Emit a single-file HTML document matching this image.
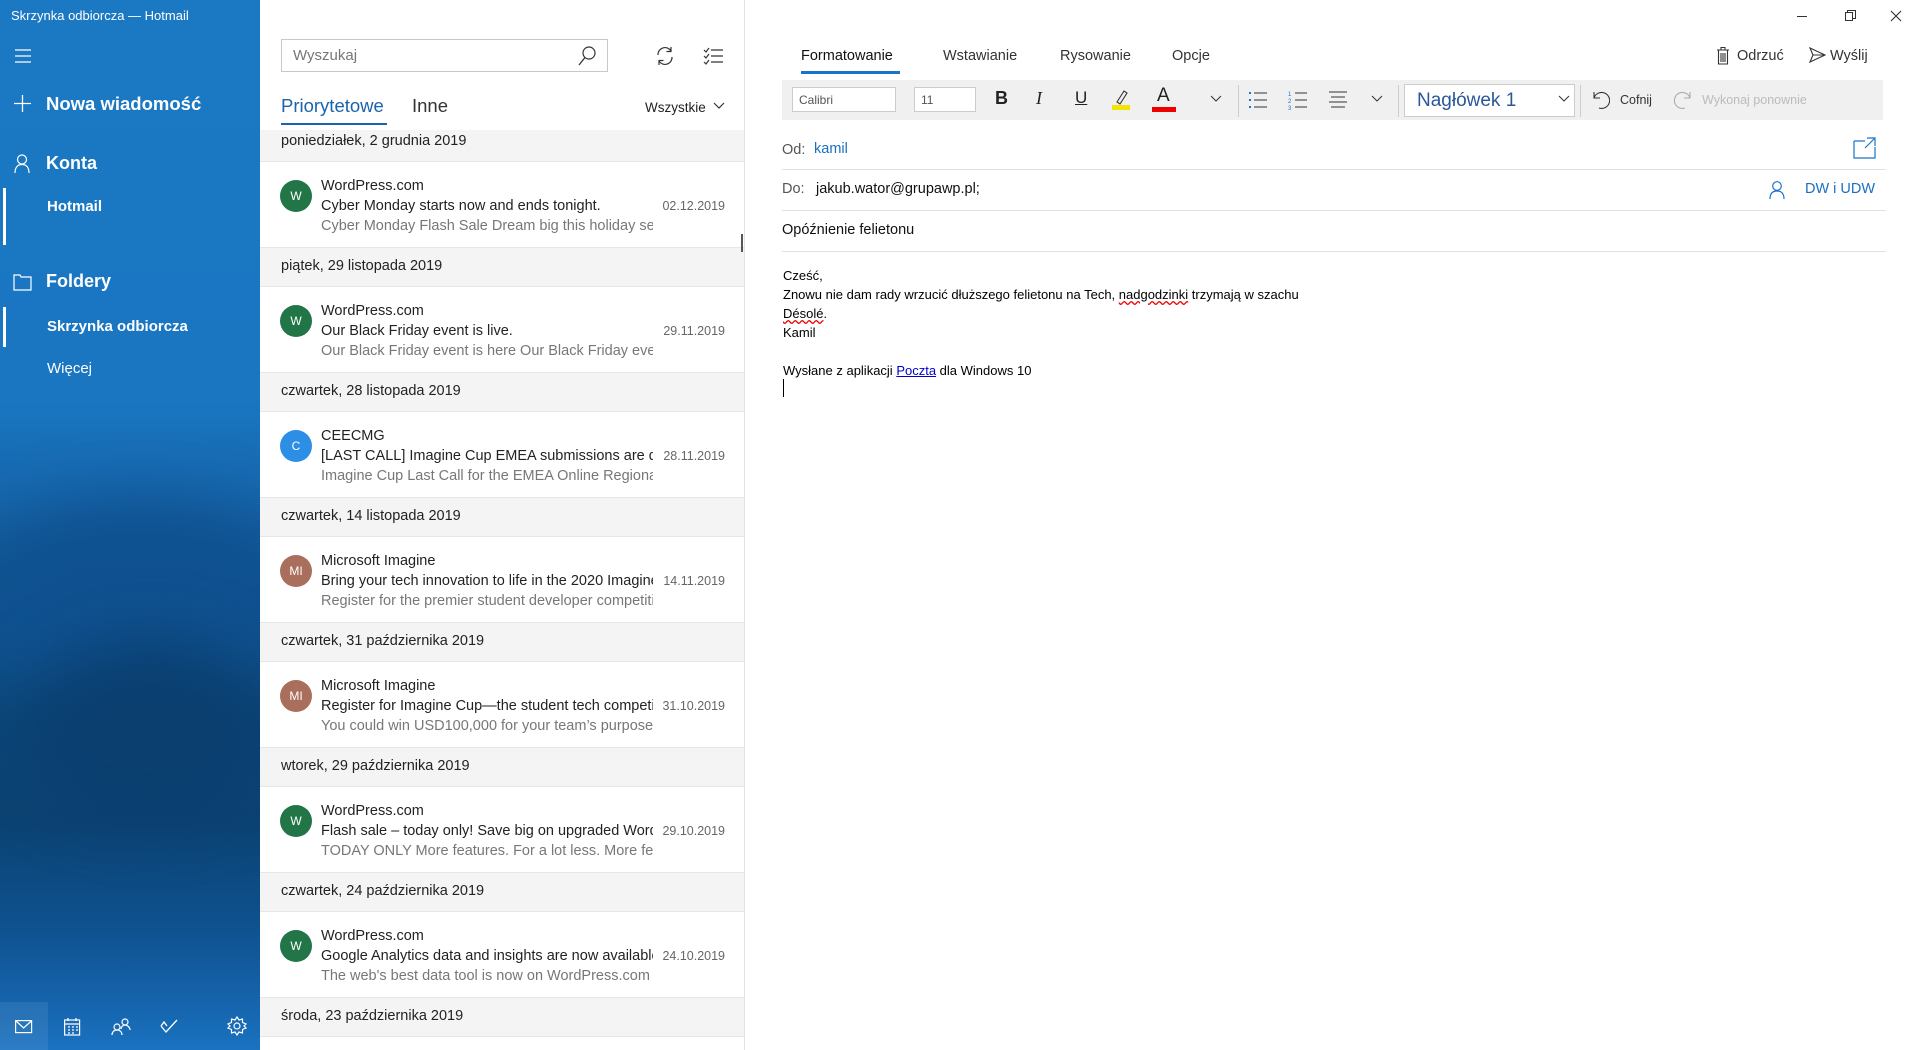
<!DOCTYPE html>
<html><head><meta charset="utf-8"><style>
*{margin:0;padding:0;box-sizing:border-box}
html,body{width:1920px;height:1050px;overflow:hidden}
body{font-family:"Liberation Sans","Noto Sans CJK JP",sans-serif;background:#fff;position:relative;color:#000}
.a{position:absolute;white-space:nowrap}
#side{position:absolute;left:0;top:0;width:260px;height:1050px;overflow:hidden;
background:linear-gradient(180deg,#1b78c3 0px,#1a76c1 400px,#1666ac 500px,#10558f 600px,#0c4679 720px,#0b4272 820px,#0f5290 930px,#1563ab 1000px,#1a72c0 1050px)}
#side .w{color:#fff}
.blob{position:absolute;border-radius:50%;filter:blur(30px)}
#list{position:absolute;left:260px;top:0;width:485px;height:1050px;background:#fff;border-right:1px solid #e3e3e3;overflow:hidden}
.grp{height:125px}
.hdr{height:40px;background:#f4f4f4;border-top:1px solid #e6e6e6;border-bottom:1px solid #e6e6e6;font-size:14.5px;color:#222;padding:10px 0 0 21px}
.it{height:85px;position:relative}
.av{position:absolute;left:20px;top:18px;width:32px;height:32px;border-radius:50%;color:#fff;font-size:12px;text-align:center;line-height:32px}
.l1,.l2,.l3{position:absolute;left:61px;width:332px;overflow:hidden;white-space:nowrap;font-size:14.5px}
.l1{top:16px;color:#222}.l2{top:36px;color:#222}.l3{top:56px;color:#777}
.dt{position:absolute;right:19px;top:37px;font-size:12.5px;color:#666}
.tb{font-size:14.5px;color:#333}
</style></head><body>
<div id="side">
 <div class="blob" style="left:-40px;top:500px;width:360px;height:200px;background:#0f5190"></div>
 <div class="blob" style="left:20px;top:640px;width:260px;height:180px;background:#0a3f70"></div>
 <div class="a w" style="left:11px;top:8px;font-size:13px">Skrzynka odbiorcza — Hotmail</div>
 <svg class="a" style="left:15px;top:48px" width="18" height="16"><path d="M0 2H16M0 8H16M0 14H16" stroke="#fff" stroke-width="1.2"/></svg>
 <svg class="a" style="left:14px;top:95px" width="18" height="18"><path d="M8.5 0V17M0 8.5H17" stroke="#fff" stroke-width="1.3"/></svg>
 <div class="a w" style="left:46px;top:93px;font-size:18.5px;font-weight:bold">Nowa wiadomość</div>
 <svg class="a" style="left:14px;top:154px" width="18" height="20"><circle cx="8" cy="5.5" r="4.5" stroke="#fff" fill="none" stroke-width="1.2"/><path d="M1 19C1 13 4 10.5 8 10.5S15 13 15 19" stroke="#fff" fill="none" stroke-width="1.2"/></svg>
 <div class="a w" style="left:46px;top:153px;font-size:18px;font-weight:bold">Konta</div>
 <div class="a" style="left:3px;top:188px;width:3px;height:57px;background:#fff"></div>
 <div class="a w" style="left:47px;top:198px;font-size:15px;font-weight:bold">Hotmail</div>
 <svg class="a" style="left:13px;top:274px" width="20" height="17"><path d="M1 1H7L8 3H18V16H1Z" stroke="#fff" fill="none" stroke-width="1.2"/></svg>
 <div class="a w" style="left:46px;top:271px;font-size:18px;font-weight:bold">Foldery</div>
 <div class="a" style="left:3px;top:307px;width:3px;height:40px;background:#fff"></div>
 <div class="a w" style="left:47px;top:318px;font-size:15px;font-weight:bold">Skrzynka odbiorcza</div>
 <div class="a w" style="left:47px;top:360px;font-size:15px">Więcej</div>
 <div class="a" style="left:0;top:1002px;width:48px;height:48px;background:rgba(255,255,255,0.08)"></div>
 <svg class="a" style="left:15px;top:1020px" width="18" height="14"><rect x=".6" y=".6" width="16" height="12" stroke="#fff" fill="none" stroke-width="1.2"/><path d="M1 1L8.6 8L16.4 1" stroke="#fff" fill="none" stroke-width="1.2"/></svg>
 <svg class="a" style="left:64px;top:1018px" width="17" height="18"><rect x=".6" y="2" width="15" height="15" stroke="#fff" fill="none" stroke-width="1.2"/><path d="M1 6H16M4 0V3M12 0V3M4 9H6M8 9H10M12 9H14M4 12H6M8 12H10M12 12H14M4 15H6M8 15H10" stroke="#fff" stroke-width="1.3"/></svg>
 <svg class="a" style="left:111px;top:1018px" width="20" height="18"><circle cx="6" cy="9" r="3" stroke="#fff" fill="none" stroke-width="1.2"/><path d="M1 17C1 14 3 12 6 12S11 14 11 17" stroke="#fff" fill="none" stroke-width="1.2"/><circle cx="14" cy="4" r="3" stroke="#fff" fill="none" stroke-width="1.2"/><path d="M10 11C10 9 12 7 14 7S19 9 19 12" stroke="#fff" fill="none" stroke-width="1.2"/></svg>
 <svg class="a" style="left:160px;top:1018px" width="18" height="16"><path d="M1 8L6 14L17 2M1 8L4 4L7 8" stroke="#fff" fill="none" stroke-width="1.3"/></svg>
 <svg class="a" style="left:227px;top:1016px" width="20" height="20"><circle cx="10" cy="10" r="3" stroke="#fff" fill="none" stroke-width="1.2"/><path d="M10 1L12 4L15.5 3L15.5 6.5L19 8L17 10L19 12L15.5 13.5L15.5 17L12 16L10 19L8 16L4.5 17L4.5 13.5L1 12L3 10L1 8L4.5 6.5L4.5 3L8 4Z" stroke="#fff" fill="none" stroke-width="1.2"/></svg>
</div>

<div id="list">
 <div class="a" style="left:21px;top:39px;width:327px;height:33px;border:1px solid #c8c8c8"></div>
 <div class="a" style="left:33px;top:47px;font-size:15px;color:#777">Wyszukaj</div>
 <svg class="a" style="left:318px;top:46px" width="18" height="20"><circle cx="11" cy="7" r="6" stroke="#333" fill="none" stroke-width="1.2"/><path d="M7 11.5L1 19" stroke="#333" stroke-width="1.3"/></svg>
 <svg class="a" style="left:395px;top:46px" width="20" height="20"><path d="M3 9A7 7 0 0 1 16 5M17 11A7 7 0 0 1 4 15M16 1V5.5H11.5M4 19V14.5H8.5" stroke="#333" fill="none" stroke-width="1.2"/></svg>
 <svg class="a" style="left:443px;top:47px" width="20" height="18"><path d="M8 3H20M8 9H20M8 15H20M1 3L3 5L6 1M1 9L3 11L6 7M1 15L3 17L6 13" stroke="#333" fill="none" stroke-width="1.2"/></svg>
 <div class="a" style="left:21px;top:95px;font-size:18.5px;color:#1b63ad">Priorytetowe</div>
 <div class="a" style="left:21px;top:123px;width:106px;height:2px;background:#1b63ad"></div>
 <div class="a" style="left:152px;top:95px;font-size:18.5px;color:#333">Inne</div>
 <div class="a" style="left:385px;top:100px;font-size:13.5px;color:#222">Wszystkie</div>
 <svg class="a" style="left:453px;top:102px" width="12" height="8"><path d="M1 1L6 6L11 1" stroke="#333" fill="none" stroke-width="1.2"/></svg>
 <div class="a" style="left:0;top:130px;width:484px;height:920px;overflow:hidden">
  <div style="margin-top:-8px">
   <div class="grp"><div class="hdr">poniedziałek, 2 grudnia 2019</div><div class="it"><div class="av" style="background:#217547">W</div><div class="l1">WordPress.com</div><div class="l2">Cyber Monday starts now and ends tonight.</div><div class="l3">Cyber Monday Flash Sale Dream big this holiday season</div><div class="dt">02.12.2019</div></div></div>
   <div class="grp"><div class="hdr">piątek, 29 listopada 2019</div><div class="it"><div class="av" style="background:#217547">W</div><div class="l1">WordPress.com</div><div class="l2">Our Black Friday event is live.</div><div class="l3">Our Black Friday event is here Our Black Friday event</div><div class="dt">29.11.2019</div></div></div>
   <div class="grp"><div class="hdr">czwartek, 28 listopada 2019</div><div class="it"><div class="av" style="background:#2d8ee6">C</div><div class="l1">CEECMG</div><div class="l2">[LAST CALL] Imagine Cup EMEA submissions are due</div><div class="l3">Imagine Cup Last Call for the EMEA Online Regional</div><div class="dt">28.11.2019</div></div></div>
   <div class="grp"><div class="hdr">czwartek, 14 listopada 2019</div><div class="it"><div class="av" style="background:#a96f5c">MI</div><div class="l1">Microsoft Imagine</div><div class="l2">Bring your tech innovation to life in the 2020 Imagine</div><div class="l3">Register for the premier student developer competition</div><div class="dt">14.11.2019</div></div></div>
   <div class="grp"><div class="hdr">czwartek, 31 października 2019</div><div class="it"><div class="av" style="background:#a96f5c">MI</div><div class="l1">Microsoft Imagine</div><div class="l2">Register for Imagine Cup—the student tech competition</div><div class="l3">You could win USD100,000 for your team’s purpose</div><div class="dt">31.10.2019</div></div></div>
   <div class="grp"><div class="hdr">wtorek, 29 października 2019</div><div class="it"><div class="av" style="background:#217547">W</div><div class="l1">WordPress.com</div><div class="l2">Flash sale – today only! Save big on upgraded WordPress</div><div class="l3">TODAY ONLY More features. For a lot less. More features</div><div class="dt">29.10.2019</div></div></div>
   <div class="grp"><div class="hdr">czwartek, 24 października 2019</div><div class="it"><div class="av" style="background:#217547">W</div><div class="l1">WordPress.com</div><div class="l2">Google Analytics data and insights are now available</div><div class="l3">The web's best data tool is now on WordPress.com</div><div class="dt">24.10.2019</div></div></div>
   <div class="grp"><div class="hdr">środa, 23 października 2019</div></div>
  </div>
 </div>
 <div class="a" style="left:481px;top:234px;width:2px;height:18px;background:#555"></div>
</div>

<div class="a" style="left:1797px;top:16px;width:10px;height:1px;background:#333"></div>
<svg class="a" style="left:1845px;top:10px" width="11" height="11"><rect x="0.5" y="2.5" width="7" height="8" stroke="#333" fill="none"/><path d="M2.5 2.5V0.5H10.5V8.5H7.5" stroke="#333" fill="none"/></svg>
<svg class="a" style="left:1890px;top:10px" width="12" height="12"><path d="M1 1L11 11M11 1L1 11" stroke="#333" stroke-width="1.1"/></svg>

<div class="a" style="left:801px;top:48px;font-size:14.5px;color:#111">Formatowanie</div>
<div class="a" style="left:801px;top:71px;width:99px;height:3px;background:#1a73c8"></div>
<div class="a tb" style="left:943px;top:48px">Wstawianie</div>
<div class="a tb" style="left:1060px;top:48px">Rysowanie</div>
<div class="a tb" style="left:1172px;top:48px">Opcje</div>
<svg class="a" style="left:1716px;top:46px" width="14" height="19"><path d="M1 4H13M5 4V1.5H9V4M2.5 4V18H11.5V4M5 7V16M7 7V16M9 7V16" stroke="#333" fill="none" stroke-width="1.1"/></svg>
<div class="a tb" style="left:1737px;top:48px">Odrzuć</div>
<svg class="a" style="left:1809px;top:47px" width="17" height="16"><path d="M1 1L16 8L1 15L4 8Z M4 8H16" stroke="#333" fill="none" stroke-width="1.1"/></svg>
<div class="a tb" style="left:1830px;top:48px">Wyślij</div>

<div class="a" style="left:782px;top:80px;width:1101px;height:40px;background:#f0f0f0"></div>
<div class="a" style="left:792px;top:87px;width:104px;height:25px;background:#fff;border:1px solid #ccc;font-size:12px;color:#555;padding:5px 0 0 6px">Calibri</div>
<div class="a" style="left:914px;top:87px;width:62px;height:25px;background:#fff;border:1px solid #ccc;font-size:12px;color:#555;padding:5px 0 0 6px">11</div>
<div class="a" style="left:995px;top:88px;font-size:18px;font-weight:bold;color:#222">B</div>
<div class="a" style="left:1036px;top:88px;font-size:18px;font-style:italic;font-family:'Liberation Serif',serif;color:#222">I</div>
<div class="a" style="left:1075px;top:88px;font-size:17px;text-decoration:underline;color:#222">U</div>
<svg class="a" style="left:1110px;top:88px" width="22" height="23"><path d="M7 14L14 3L17 5L10 16Z" stroke="#333" fill="none" stroke-width="1.1"/><rect x="2" y="17" width="18" height="5" fill="#f4e500"/></svg>
<div class="a" style="left:1157px;top:85px;font-size:19px;color:#222">A</div>
<div class="a" style="left:1152px;top:107px;width:24px;height:5px;background:#e00"></div>
<svg class="a" style="left:1210px;top:95px" width="12" height="8"><path d="M1 1L6 6L11 1" stroke="#333" fill="none"/></svg>
<div class="a" style="left:1238px;top:85px;width:1px;height:32px;background:#ccc"></div>
<svg class="a" style="left:1248px;top:91px" width="20" height="18"><path d="M6 2H19M6 9H19M6 16H19" stroke="#333"/><path d="M1 2H3M1 9H3M1 16H3" stroke="#1a73c8" stroke-width="2"/></svg>
<svg class="a" style="left:1288px;top:90px" width="20" height="20"><path d="M7 3H19M7 10H19M7 17H19" stroke="#333"/><text x="0" y="6" font-size="6" fill="#1a73c8">1</text><text x="0" y="13" font-size="6" fill="#1a73c8">2</text><text x="0" y="20" font-size="6" fill="#1a73c8">3</text></svg>
<svg class="a" style="left:1328px;top:90px" width="20" height="20"><path d="M1 2H19M3 7H17M1 12H19M3 17H17" stroke="#333"/></svg>
<svg class="a" style="left:1371px;top:95px" width="12" height="8"><path d="M1 1L6 6L11 1" stroke="#333" fill="none"/></svg>
<div class="a" style="left:1398px;top:85px;width:1px;height:32px;background:#ccc"></div>
<div class="a" style="left:1404px;top:84px;width:171px;height:33px;background:#fff;border:1px solid #ccc;font-size:19px;color:#2b579a;padding:5px 0 0 12px">Nagłówek 1</div>
<svg class="a" style="left:1558px;top:95px" width="12" height="8"><path d="M1 1L6 6L11 1" stroke="#333" fill="none"/></svg>
<div class="a" style="left:1580px;top:85px;width:1px;height:32px;background:#ccc"></div>
<svg class="a" style="left:1590px;top:90px" width="20" height="20"><path d="M4 2V8H10M4 8A8 8 0 1 1 9 18" stroke="#333" fill="none" stroke-width="1.1"/></svg>
<div class="a" style="left:1620px;top:93px;font-size:12.5px;color:#333">Cofnij</div>
<svg class="a" style="left:1674px;top:90px" width="20" height="20"><path d="M16 2V8H10M16 8A8 8 0 1 0 11 18" stroke="#aaa" fill="none" stroke-width="1.1"/></svg>
<div class="a" style="left:1702px;top:93px;font-size:12.5px;color:#bbb">Wykonaj ponownie</div>

<div class="a" style="left:782px;top:142px;font-size:14.5px;color:#555">Od:</div>
<div class="a" style="left:814px;top:141px;font-size:14.5px;color:#1a6fc0">kamil</div>
<svg class="a" style="left:1853px;top:137px" width="24" height="22"><path d="M1 4H12M1 4V21H22V10M14 1H22V9M22 1L12 11" stroke="#1a73c8" fill="none" stroke-width="1.2"/></svg>
<div class="a" style="left:782px;top:169px;width:1104px;height:1px;background:#e1e1e1"></div>
<div class="a" style="left:782px;top:181px;font-size:14.5px;color:#555">Do:</div>
<div class="a" style="left:816px;top:181px;font-size:14.5px;color:#111">jakub.wator@grupawp.pl;</div>
<svg class="a" style="left:1769px;top:181px" width="16" height="19"><circle cx="8" cy="5" r="4.3" stroke="#1a73c8" fill="none" stroke-width="1.2"/><path d="M1 18C1 12 4 10 8 10S15 12 15 18" stroke="#1a73c8" fill="none" stroke-width="1.2"/></svg>
<div class="a" style="left:1805px;top:181px;font-size:14.5px;color:#1a6fc0">DW i UDW</div>
<div class="a" style="left:782px;top:210px;width:1104px;height:1px;background:#e1e1e1"></div>
<div class="a" style="left:782px;top:222px;font-size:14.5px;color:#111">Opóźnienie felietonu</div>
<div class="a" style="left:782px;top:251px;width:1104px;height:1px;background:#e1e1e1"></div>
<div class="a" style="left:783px;top:266px;font-size:13px;line-height:19px;color:#000">Cześć,<br>Znowu nie dam rady wrzucić dłuższego felietonu na Tech, <span style="text-decoration:underline wavy #e00">nadgodzinki</span> trzymają w szachu<br><span style="text-decoration:underline wavy #e00">Désolé</span>.<br>Kamil<br><br>Wysłane z aplikacji <span style="color:#0000cc;text-decoration:underline">Poczta</span> dla Windows 10</div>
<div class="a" style="left:783px;top:379px;width:1px;height:18px;background:#000"></div>
</body></html>
